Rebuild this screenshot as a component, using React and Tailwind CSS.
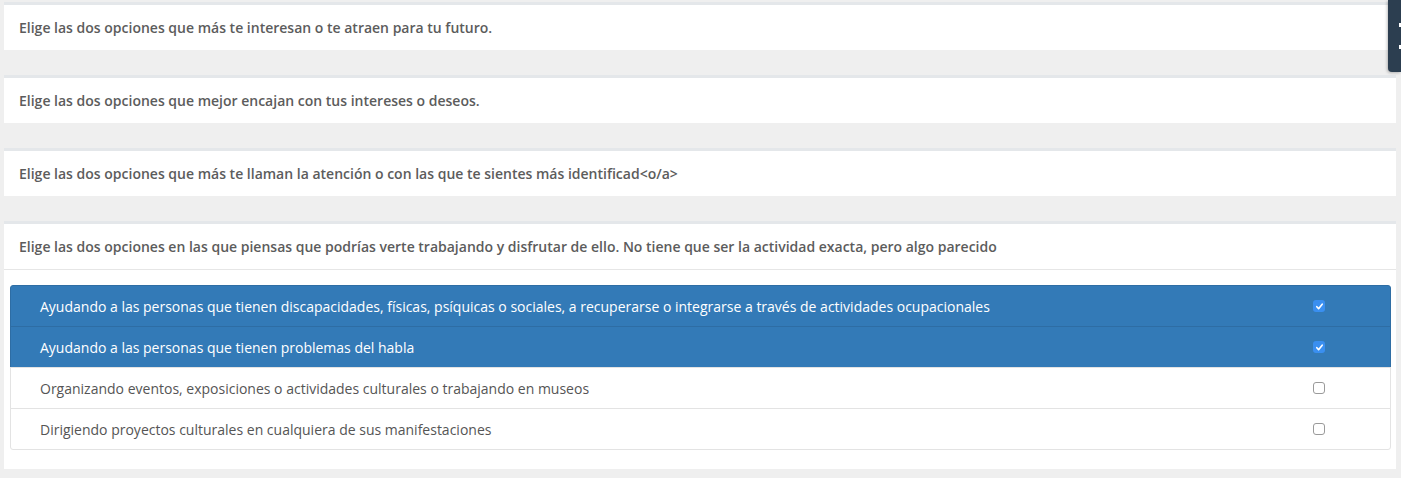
import React from 'react';

const questions = [
  'Elige las dos opciones que más te interesan o te atraen para tu futuro.',
  'Elige las dos opciones que mejor encajan con tus intereses o deseos.',
  'Elige las dos opciones que más te llaman la atención o con las que te sientes más identificad<o/a>',
];

const options = [
  { label: 'Ayudando a las personas que tienen discapacidades, físicas, psíquicas o sociales, a recuperarse o integrarse a través de actividades ocupacionales', checked: true },
  { label: 'Ayudando a las personas que tienen problemas del habla', checked: true },
  { label: 'Organizando eventos, exposiciones o actividades culturales o trabajando en museos', checked: false },
  { label: 'Dirigiendo proyectos culturales en cualquiera de sus manifestaciones', checked: false },
];

const Checkbox = ({ checked }) =>
  checked ? (
    <span className="flex h-[12px] w-[12px] items-center justify-center rounded-[3px] bg-[#3a8ff0]">
      <svg width="9" height="9" viewBox="0 0 10 10" fill="none">
        <path d="M2 5.2l2 2.2L8 2.4" stroke="white" strokeWidth="1.8" strokeLinecap="round" strokeLinejoin="round" />
      </svg>
    </span>
  ) : (
    <span className="block h-[12px] w-[12px] rounded-[3px] border border-[#9a9a9a] bg-white" />
  );

const Panel = ({ title, children }) => (
  <div className="border-t-[3px] border-[#e4e7ea] bg-white">
    <div className="flex h-[45px] items-center pl-[15px] text-[14px] font-semibold text-[#5c5c5c]">
      {title}
    </div>
    {children}
  </div>
);

export default function App() {
  return (
    <div className="relative min-h-[478px] bg-[#efefef] pl-[4px] pr-[5px] pt-[2px] pb-[8px] font-['Open_Sans',sans-serif]">
      <div className="flex flex-col gap-[25px]">
        {questions.map((q, i) => (
          <Panel key={i} title={q} />
        ))}
        <Panel title="Elige las dos opciones en las que piensas que podrías verte trabajando y disfrutar de ello. No tiene que ser la actividad exacta, pero algo parecido">
          <div className="border-t border-[#e6e6e6] pt-[15px] pb-[19px] pl-[6px] pr-[5px]">
            <div className="flex flex-col">
              {options.map((o, i) => (
                <div
                  key={i}
                  className={
                    o.checked
                      ? 'flex h-[42px] items-center justify-between border border-[#2e6da4] bg-[#337ab7] pl-[29px] pr-[65px] text-[14px] text-white first:rounded-t-[3px] -mt-px first:mt-0'
                      : 'flex h-[42px] items-center justify-between border border-[#e3e3e3] bg-white pl-[29px] pr-[65px] text-[14px] text-[#555] last:rounded-b-[3px] -mt-px first:mt-0'
                  }
                >
                  <span>{o.label}</span>
                  <Checkbox checked={o.checked} />
                </div>
              ))}
            </div>
          </div>
        </Panel>
      </div>
      <div className="absolute right-0 top-0 flex h-[72px] w-[13px] flex-col items-end justify-around rounded-bl-[4px] bg-[#2c3e50] py-[14px] shadow-[-1px_1px_3px_rgba(0,0,0,0.25)]">
        <span className="block h-[4px] w-[2px] bg-white" />
        <span className="block h-[4px] w-[2px] bg-white" />
      </div>
    </div>
  );
}
